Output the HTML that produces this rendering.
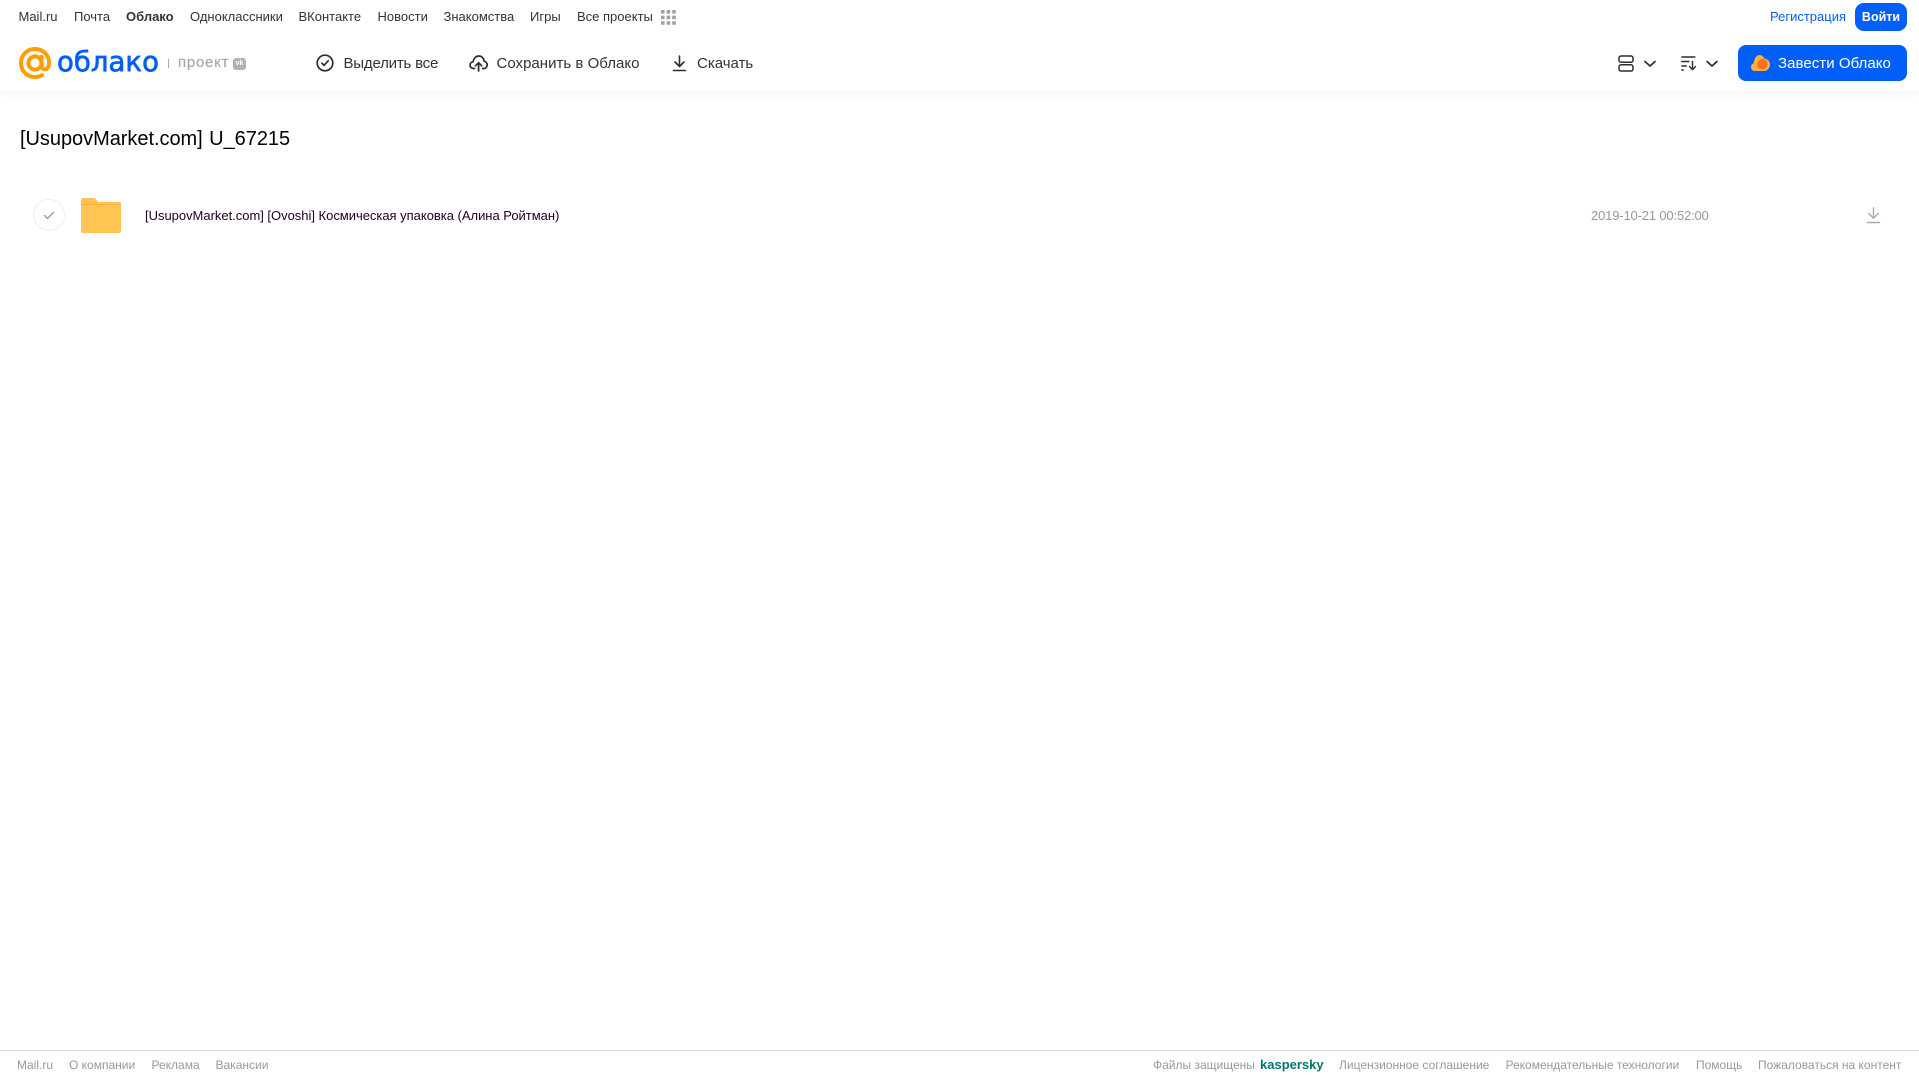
<!DOCTYPE html>
<html lang="ru"><head><meta charset="utf-8"><title>Облако</title>
<style>
html,body{margin:0;padding:0;background:#fff}
body{position:relative;width:1919px;height:1079px;overflow:hidden;font-family:"Liberation Sans",Arial,sans-serif}
.t{position:absolute;white-space:nowrap;line-height:20px;height:20px}
.n{top:7px;font-size:13px;color:#333}
.h{top:53.500px;font-size:15px;color:#333}
.f{top:1055px;font-size:12px;color:#999}
svg{position:absolute;overflow:visible}
</style></head><body>
<div style="position:absolute;left:0;top:0;width:1919px;height:91px;background:#fff;box-shadow:0 2px 10px rgba(0,0,0,.05)"></div>

<span class="t n" style="left:18.5px">Mail.ru</span>
<span class="t n" style="left:74px">Почта</span>
<span class="t n" style="left:126px;font-weight:bold">Облако</span>
<span class="t n" style="left:190px">Одноклассники</span>
<span class="t n" style="left:298.5px">ВКонтакте</span>
<span class="t n" style="left:377.5px">Новости</span>
<span class="t n" style="left:443.5px">Знакомства</span>
<span class="t n" style="left:530px">Игры</span>
<span class="t n" style="left:577px">Все проекты</span>
<svg style="left:661px;top:10px" width="15" height="15" fill="#a0a0a0"><rect x="0" y="0" width="3.6" height="3.6" rx=".6"/><rect x="5.6" y="0" width="3.6" height="3.6" rx=".6"/><rect x="11.2" y="0" width="3.6" height="3.6" rx=".6"/><rect x="0" y="5.6" width="3.6" height="3.6" rx=".6"/><rect x="5.6" y="5.6" width="3.6" height="3.6" rx=".6"/><rect x="11.2" y="5.6" width="3.6" height="3.6" rx=".6"/><rect x="0" y="11.2" width="3.6" height="3.6" rx=".6"/><rect x="5.6" y="11.2" width="3.6" height="3.6" rx=".6"/><rect x="11.2" y="11.2" width="3.6" height="3.6" rx=".6"/></svg>

<span class="t n" style="left:1770px;color:#005ff9">Регистрация</span>
<div style="position:absolute;left:1855px;top:3px;width:52px;height:28px;background:#005ff9;border-radius:9px;color:#fff;font-size:12.500px;font-weight:bold;line-height:28px;text-align:center">Войти</div>

<svg style="left:19px;top:47px" width="32" height="32" viewBox="0 0 32 32" fill="none" stroke="#ff9e00" stroke-width="4" stroke-linecap="round"><circle cx="16" cy="16" r="6.600"/><path d="M22.600 9.800V18c0 2.800 1.500 4.400 3.500 4.400 2.600 0 4-2.800 4-6.400C30.100 8 23.800 2 16 2S2 8 2 16s6 14 14 14c2.700 0 5-.6 7-1.800"/></svg>
<span style="position:absolute;left:57px;top:42px;line-height:40px;font-family:'DejaVu Sans',sans-serif;font-size:27.5px;color:#005ff9;-webkit-text-stroke:.7px #005ff9;letter-spacing:.05px;white-space:nowrap">облако</span>
<div style="position:absolute;left:168px;top:59px;width:1px;height:9px;background:#aaa"></div>
<span class="t" style="left:178px;top:53px;font-size:15px;color:#a8a8a8;letter-spacing:.75px;-webkit-text-stroke:.2px #a8a8a8">проект</span>
<div style="position:absolute;left:233px;top:57.500px;width:13px;height:12px;background:#b2b2b2;border-radius:3px;color:#fff;font-size:7px;font-weight:bold;line-height:12px;text-align:center">vk</div>

<svg style="left:316px;top:54px" width="18" height="18" viewBox="0 0 18 18" fill="none" stroke="#2c2d2e" stroke-width="1.700" stroke-linecap="round" stroke-linejoin="round"><circle cx="9" cy="9" r="7.800"/><path d="M5.800 9.200l2.200 2.200 4.200-4.600"/></svg>
<span class="t h" style="left:343.500px;letter-spacing:-.2px">Выделить все</span>

<svg style="left:469px;top:55px" width="19" height="17" viewBox="0 0 19 17" fill="none" stroke="#2c2d2e" stroke-width="1.700" stroke-linecap="round" stroke-linejoin="round"><path d="M5.500 13.500H4.500C2.500 13.500 1 12 1 10.200 1 8.400 2.300 7 4 6.900 4.500 3.600 6.800 1 9.800 1c2.900 0 5 2.200 5.400 5.300 1.700.2 3 1.800 3 3.700 0 1.900-1.500 3.500-3.300 3.500h-1.300"/><path d="M9.600 16V8M6.500 10.800l3.100-3.100 3.100 3.100"/></svg>
<span class="t h" style="left:496.500px;letter-spacing:.02px">Сохранить в Облако</span>

<svg style="left:671.500px;top:55px" width="15" height="17" viewBox="0 0 15 17" fill="none" stroke="#2c2d2e" stroke-width="1.600" stroke-linecap="round" stroke-linejoin="round"><path d="M7.500 1v10M3 7l4.500 4.500L12 7"/><path d="M1.500 15.500h12"/></svg>
<span class="t h" style="left:697px;letter-spacing:0">Скачать</span>

<svg style="left:1618px;top:55px" width="16" height="17" viewBox="0 0 16 17" fill="none" stroke="#2c2d2e" stroke-width="1.500"><rect x="1" y="1" width="14" height="6.200" rx="2"/><rect x="1" y="9.800" width="14" height="6.200" rx="2"/></svg>
<svg style="left:1644px;top:60px" width="12" height="8" viewBox="0 0 12 8" fill="none" stroke="#2c2d2e" stroke-width="1.700" stroke-linecap="round" stroke-linejoin="round"><path d="M1 1.500l5 4.500 5-4.500"/></svg>
<svg style="left:1681px;top:56px" width="16" height="15" viewBox="0 0 16 15" fill="none" stroke="#2c2d2e" stroke-width="1.400" stroke-linecap="round" stroke-linejoin="round"><path d="M.8 1h13M.8 5.500h7M.8 10h4.500M.8 14h1.500"/><path d="M11.500 5.500v8M8.500 10.500l3 3.200 3-3.200"/></svg>
<svg style="left:1706px;top:60px" width="12" height="8" viewBox="0 0 12 8" fill="none" stroke="#2c2d2e" stroke-width="1.700" stroke-linecap="round" stroke-linejoin="round"><path d="M1 1.500l5 4.500 5-4.500"/></svg>

<div style="position:absolute;left:1738px;top:45px;width:169px;height:36px;background:#005ff9;border-radius:8px"></div>
<svg style="left:1751px;top:55px" width="19" height="16" viewBox="0 0 19 16"><path d="M4 16C1.800 16 0 14.200 0 12c0-1.800 1.200-3.300 2.800-3.800C3 3.800 5.600 0 8.500 0c2.200 0 4 1.500 4.800 3.500 3.200.3 5.700 2.700 5.700 6S16.500 16 13 16z" fill="#ffb13d"/><circle cx="11.500" cy="9.300" r="5.300" fill="#f5722c"/></svg>
<span class="t" style="left:1778px;top:53.500px;font-size:15px;color:#fff;letter-spacing:.05px">Завести Облако</span>

<span class="t" style="left:20px;top:129px;font-size:20px;color:#000;height:24px;word-spacing:1px;letter-spacing:-.04px">[UsupovMarket.com] U_67215</span>

<div style="position:absolute;left:33px;top:199px;width:30px;height:30px;border:1px solid #efefef;border-radius:50%"></div>
<svg style="left:43px;top:211px" width="12" height="9" viewBox="0 0 12 9" fill="none" stroke="#999" stroke-width="1.300" stroke-linecap="round" stroke-linejoin="round"><path d="M1.500 4.500l3 3 6-6"/></svg>
<svg style="left:81px;top:198px" width="40" height="35" viewBox="0 0 40 35"><path d="M2 0h10c1.500 0 2.500.8 3.500 2l1.500 2h21c1.100 0 2 .9 2 2v27c0 1.100-.9 2-2 2H2c-1.100 0-2-.9-2-2V2C0 .9.900 0 2 0z" fill="#ffc24d"/><path d="M0 8c0-1.100.9-2 2-2h36c1.100 0 2 .9 2 2v25c0 1.100-.9 2-2 2H2c-1.100 0-2-.9-2-2z" fill="#ffc552"/><rect x="0" y="6" width="40" height="1" fill="#f7b53c"/></svg>
<span class="t" style="left:145px;top:206px;font-size:13px;color:#200020;letter-spacing:-.02px">[UsupovMarket.com] [Ovoshi] Космическая упаковка (Алина Ройтман)</span>
<span class="t" style="left:1591px;top:206px;font-size:13px;color:#999;letter-spacing:-.16px">2019-10-21 00:52:00</span>
<svg style="left:1867px;top:207px" width="13" height="17" viewBox="0 0 13 17" fill="none" stroke="#aaa" stroke-width="1.400" stroke-linecap="round" stroke-linejoin="round"><path d="M6.500 .8v10.400M1.800 6.500l4.700 4.700 4.700-4.700"/><path d="M.5 15.500h12"/></svg>

<div style="position:absolute;left:0;top:1050px;width:1919px;height:1px;background:#dcdcdc"></div>
<span class="t f" style="left:17px">Mail.ru</span>
<span class="t f" style="left:69px">О компании</span>
<span class="t f" style="left:151.500px">Реклама</span>
<span class="t f" style="left:215.500px">Вакансии</span>
<span class="t f" style="left:1153px">Файлы защищены</span>
<span class="t f" style="left:1260px;font-size:13px;font-weight:bold;color:#00796b">kaspersky</span>
<span class="t f" style="left:1339px">Лицензионное соглашение</span>
<span class="t f" style="left:1505.500px">Рекомендательные технологии</span>
<span class="t f" style="left:1696px">Помощь</span>
<span class="t f" style="left:1758px">Пожаловаться на контент</span>
</body></html>
